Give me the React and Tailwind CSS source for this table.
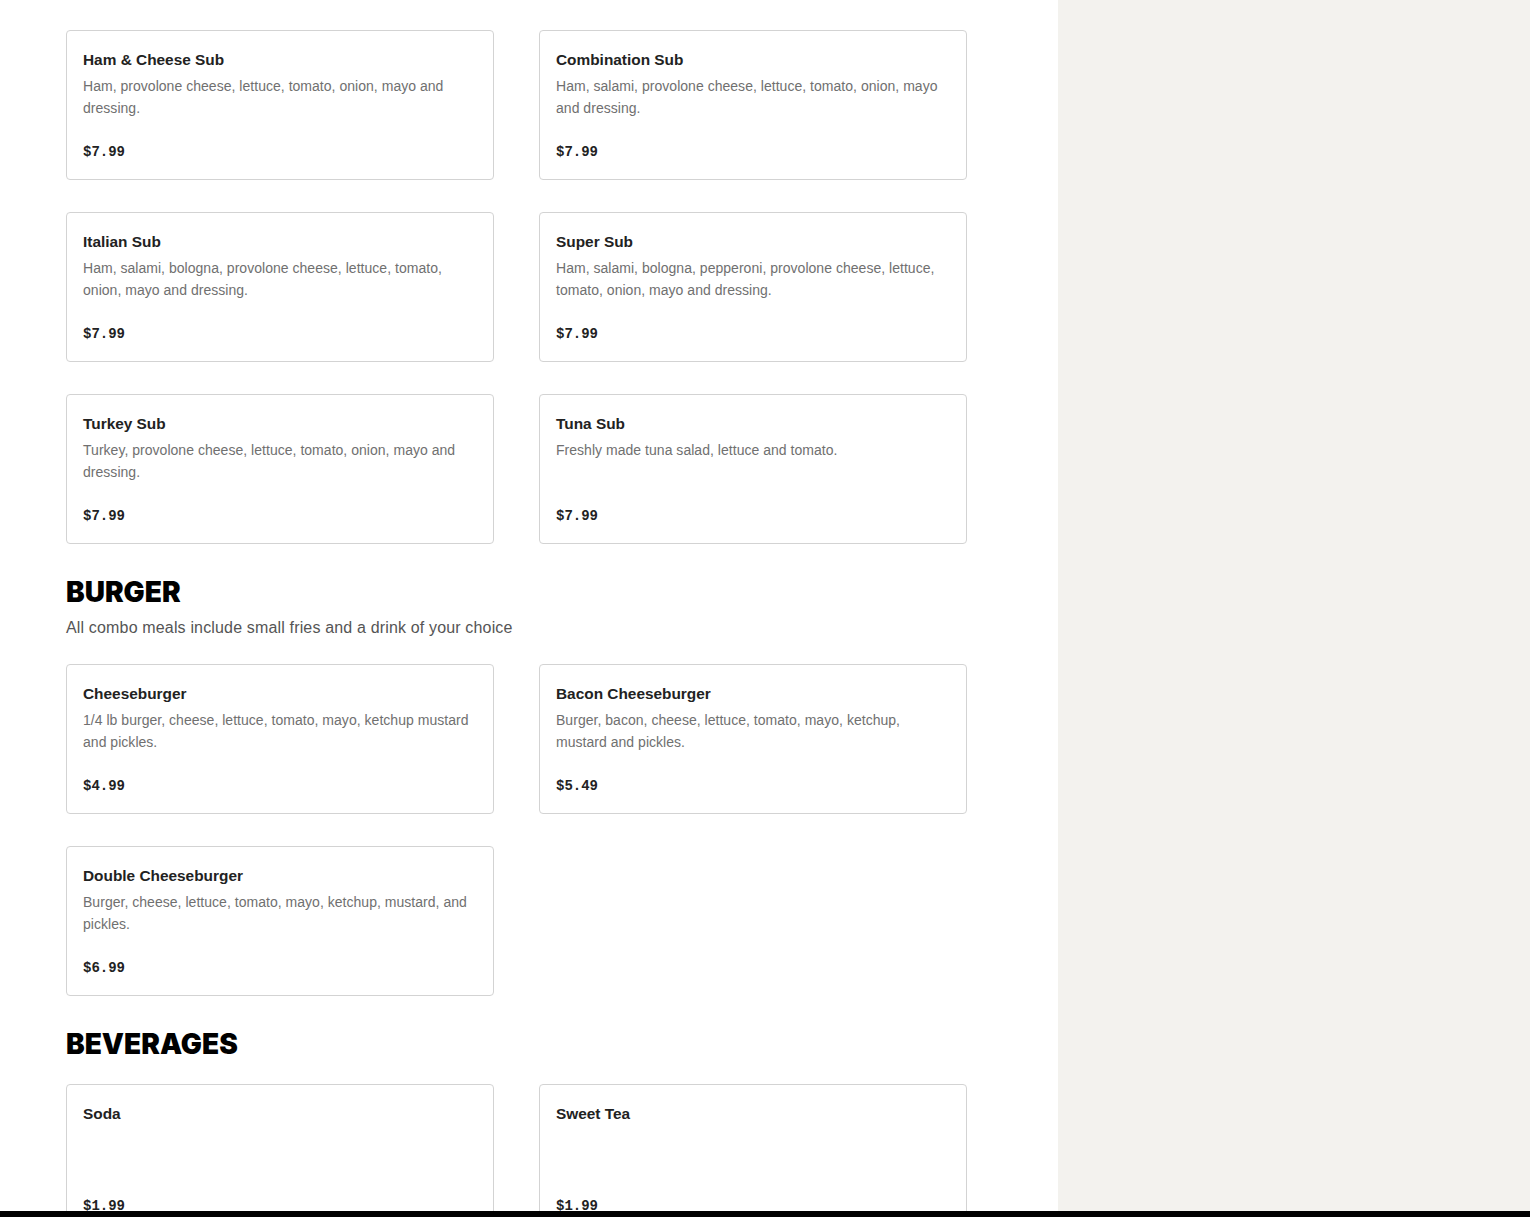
const sections = [
  {
    title: 'SUBS',
    note: 'All subs are served on a fresh roll',
    hidden: true,
    items: [
      { name: 'Ham & Cheese Sub', desc: 'Ham, provolone cheese, lettuce, tomato, onion, mayo and dressing.', price: '$7.99' },
      { name: 'Combination Sub', desc: 'Ham, salami, provolone cheese, lettuce, tomato, onion, mayo and dressing.', price: '$7.99' },
      { name: 'Italian Sub', desc: 'Ham, salami, bologna, provolone cheese, lettuce, tomato, onion, mayo and dressing.', price: '$7.99' },
      { name: 'Super Sub', desc: 'Ham, salami, bologna, pepperoni, provolone cheese, lettuce, tomato, onion, mayo and dressing.', price: '$7.99' },
      { name: 'Turkey Sub', desc: 'Turkey, provolone cheese, lettuce, tomato, onion, mayo and dressing.', price: '$7.99' },
      { name: 'Tuna Sub', desc: 'Freshly made tuna salad, lettuce and tomato.', price: '$7.99' },
    ],
  },
  {
    title: 'BURGER',
    note: 'All combo meals include small fries and a drink of your choice',
    items: [
      { name: 'Cheeseburger', desc: '1/4 lb burger, cheese, lettuce, tomato, mayo, ketchup mustard and pickles.', price: '$4.99' },
      { name: 'Bacon Cheeseburger', desc: 'Burger, bacon, cheese, lettuce, tomato, mayo, ketchup, mustard and pickles.', price: '$5.49' },
      { name: 'Double Cheeseburger', desc: 'Burger, cheese, lettuce, tomato, mayo, ketchup, mustard, and pickles.', price: '$6.99' },
    ],
  },
  {
    title: 'BEVERAGES',
    items: [
      { name: 'Soda', desc: '', price: '$1.99' },
      { name: 'Sweet Tea', desc: '', price: '$1.99' },
    ],
  },
];

const MenuCard = ({ item }) => (
  <div className="border border-[#d3d3d3] rounded-[4px] bg-white px-4 pt-[17px] pb-[17px]">
    <h3 className="text-[15.4px] leading-6 font-semibold text-[#222]">{item.name}</h3>
    <p className="mt-[3px] min-h-[44px] text-[14px] leading-[22px] tracking-[0.03px] text-[#707070]">{item.desc}</p>
    <div className="mt-[23px] text-[14px] leading-5 font-bold text-[#222] font-['Liberation_Mono',monospace]">
      {item.price}
    </div>
  </div>
);

const Section = ({ section }) => (
  <section className={section.hidden ? '' : 'mt-[30px]'}>
    {!section.hidden && (
      <h2 className="text-[28px] leading-9 font-black text-black font-['Inter',sans-serif]">
        {section.title}
      </h2>
    )}
    {section.note && (
      <p className={`${section.hidden ? '-mt-[18px]' : 'mt-[6px]'} text-[16px] leading-6 tracking-[0.16px] text-[#555]`}>
        {section.note}
      </p>
    )}
    <div className={`${section.note ? 'mt-6' : 'mt-[22px]'} grid grid-cols-2 gap-x-[45px] gap-y-8`}>
      {section.items.map((item) => (
        <MenuCard key={item.name} item={item} />
      ))}
    </div>
  </section>
);

export default function App() {
  return (
    <div className="h-screen overflow-hidden flex bg-white font-['Liberation_Sans',Arial,sans-serif]">
      <main className="w-[1058px] shrink-0 pl-[66px] pr-[91px]">
        {sections.map((s) => (
          <Section key={s.title} section={s} />
        ))}
      </main>
      <aside className="flex-1 bg-[#f3f2ee]" />
      <div className="fixed bottom-0 left-0 right-0 h-[6px] bg-black" />
    </div>
  );
}
